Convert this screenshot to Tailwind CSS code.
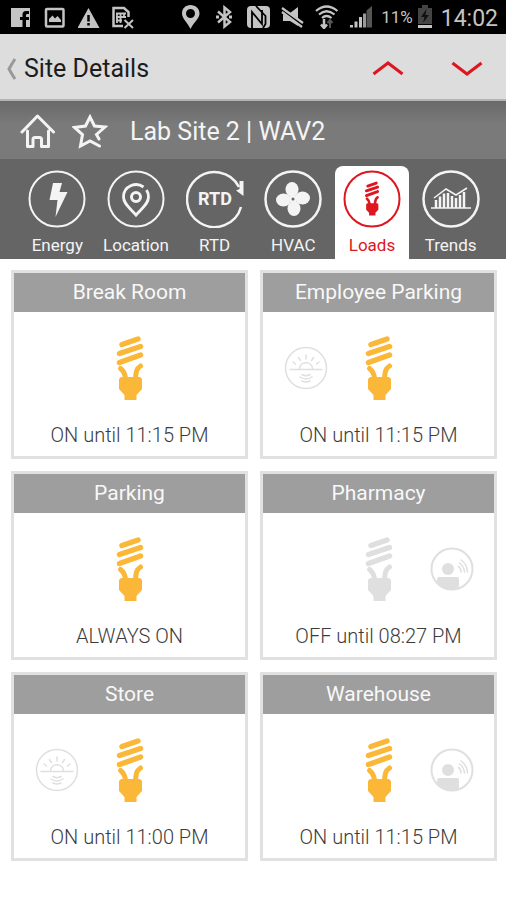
<!DOCTYPE html>
<html lang="en">
<head>
    <meta charset="UTF-8" />
    <meta name="viewport" content="width=device-width, initial-scale=1.0" />
    <title>Site Details</title>
    <script src="https://cdn.jsdelivr.net/npm/@tailwindcss/browser@4"></script>
    <style>
        body { font-family: Roboto, 'Liberation Sans', sans-serif; }
    </style>
</head>
<body class="bg-white text-[#3c3c3c] min-h-screen">

<!-- Shared icons -->
<svg class="hidden">
    <symbol id="bulb" viewBox="0 0 28 66">
        <g fill="none" stroke="currentColor" stroke-width="5.500" stroke-linecap="round">
            <path d="M6 9.500 22 4M3.500 18.500 24.500 11.500M3.500 27.500 24.500 20" />
            <path d="M4.500 33.500C7 35.500 9 38 9.500 43M24.500 31C20.500 33.500 20 37 19.500 43" stroke-width="5" />
        </g>
        <path fill="currentColor" d="M5 42H24L26 44V54L20.500 60V65H8.500V60L3 54V44Z" />
    </symbol>
    <symbol id="daylight" viewBox="0 0 44 44">
        <g fill="none" stroke="currentColor" stroke-width="1.500" stroke-linecap="round">
            <circle cx="22" cy="22" r="20.500" />
            <path d="M6 23.500H38M15.500 23C15.500 14.500 28.500 14.500 28.500 23" />
            <path d="M9 16 11.500 18M14.500 11.500 16.500 14.500M22 9V13M29.500 11.500 27.500 14.500M35 16 32.500 18" />
            <path d="M18 28.500Q22 31 26 28.500M16 31Q22 35 28 31M18 35Q22 37 26 35" />
        </g>
    </symbol>
    <symbol id="motion" viewBox="0 0 44 44">
        <circle cx="22" cy="22" r="20.500" fill="none" stroke="currentColor" stroke-width="2" />
        <circle cx="18" cy="22" r="6" fill="currentColor" />
        <path fill="currentColor" d="M7 32Q7 30 9 30H27Q29 30 29 32V41Q17 45 7 36Z" />
        <path fill="none" stroke="currentColor" stroke-width="1.500" stroke-linecap="round" d="M28.500 19.500Q31 21 31 25M29.500 16Q34 19 34.500 25M31 13Q37 17 37.500 25" />
    </symbol>
</svg>

<!-- Phone status bar -->
<div class="bg-black text-[#c4c4c4] h-[34px] pl-[10px] pr-2 flex justify-between items-center">
    <div class="flex items-center gap-3">
        <svg class="w-[22px] h-6" viewBox="0 0 22 24">
            <path fill="currentColor" d="M1 3H20V22H16V15H19V12H16V10Q16 9 17.500 9H19V6H16Q12.500 6 12.500 9.500V12H10V15H12.500V22H1Z" />
        </svg>
        <svg class="w-[22px] h-6" viewBox="0 0 22 24">
            <rect x="2" y="4" width="17.500" height="17.500" rx="1" fill="none" stroke="currentColor" stroke-width="2.500" />
            <path fill="currentColor" d="M5 17V14L8.500 10.500 11 13.500 13.500 11 17 15V17Z" />
        </svg>
        <svg class="w-[22px] h-6" viewBox="0 0 22 24">
            <path fill="currentColor" d="M10.500 3 21.500 23H-.5Z" />
            <path stroke="#000" stroke-width="2.500" d="M10.500 10V16.500M10.500 18V20.500" />
        </svg>
        <svg class="w-[22px] h-6" viewBox="0 0 22 24">
            <path fill="none" stroke="currentColor" stroke-width="2.500" d="M11 21H1.500V3H12L16.500 7V12" />
            <path fill="none" stroke="currentColor" stroke-width="1.800" d="M4 8.500H14M4 12H14M4 15.500H10M5 8V18M8.500 8V18M12 8V13" />
            <path stroke="currentColor" stroke-width="2" d="M12.500 15 21 23M21 15 12.500 23" />
        </svg>
    </div>
    <div class="flex items-center gap-2">
        <div class="flex items-center gap-[10px]">
            <svg class="w-6 h-6" viewBox="0 0 24 24">
                <path fill="currentColor" fill-rule="evenodd" d="M11.500 0C6.500 0 3 3.500 3 8.500 3 13.500 8 17 11.500 24 15 17 20.500 13.500 20.500 8.500 20.500 3.500 16.500 0 11.500 0ZM11.500 4A4.500 4.500 0 1 1 11.500 13 4.500 4.500 0 1 1 11.500 4Z" />
            </svg>
            <svg class="w-6 h-6" viewBox="0 0 24 24">
                <path fill="none" stroke="currentColor" stroke-width="2.500" d="M5 6.500 17 17 11.500 21.500V2.500L17 7 5 17.500" />
                <path fill="currentColor" d="M3 10.500H6V13.500H3ZM16 10.500H19V13.500H16Z" />
            </svg>
            <svg class="w-6 h-6" viewBox="0 0 24 24">
                <path fill="currentColor" d="M4 1H19Q23 1 23 5V19Q23 23 19 23H4Q0 23 0 19V5Q0 1 4 1Z" />
                <path fill="none" stroke="#000" stroke-width="1.800" d="M5 23V7L15 19V5M9 1 18.500 11V19L16 23" />
            </svg>
            <svg class="w-6 h-6" viewBox="0 0 24 24">
                <path fill="currentColor" d="M2 8H9L17 2V21L9 16H2Z" />
                <path stroke="#000" stroke-width="5" d="M0 4.500 24 21.500" />
                <path stroke="currentColor" stroke-width="2.200" d="M1 3 22 18M1 7 21 22" />
            </svg>
            <svg class="w-6 h-6" viewBox="0 0 24 24">
                <path fill="none" stroke="currentColor" stroke-width="2.200" d="M1 6Q11.500-3 22.500 6M4 9.500Q11.500 3 19.500 9.500M7 13Q11.500 9 16.500 13" />
                <path stroke="currentColor" stroke-width="2.500" d="M9 14V23M6 19.500 9 23 12 19.500" fill="none" />
                <path stroke="#555" stroke-width="2" d="M15 23V15M12.500 18 15 15 17.500 18" fill="none" />
            </svg>
            <svg class="w-6 h-6" viewBox="0 0 24 24">
                <path stroke="currentColor" stroke-width="3" d="M2.500 20V22.500M7 16.500V22.500M11.500 12V22.500" />
                <path stroke="#999" stroke-width="3" d="M15.500 8.500V22.500" />
                <path fill="#555" d="M17.500 5.500 23 1V22.500H17.500Z" />
            </svg>
        </div>
        <div class="flex items-center gap-1">
            <span class="text-[17px] leading-6">11%</span>
            <svg class="w-4 h-6" viewBox="0 0 16 24">
                <path fill="#444" d="M5 0H11V3H15V19H1V3H5Z" />
                <path fill="#111" d="M9.500 4 4 12H7.500L6 18 12 10H8.500Z" />
                <path fill="currentColor" d="M1 20H15V23H1Z" />
            </svg>
        </div>
        <span class="text-[23px] leading-8 pt-[3px]">14:02</span>
    </div>
</div>

<header class="bg-[#dddddd] text-[#1c1c1c] h-[67px] border-b-2 border-[#b4b4b4] pl-[6px] pr-4 pt-1 flex justify-between items-center">
    <a href="#" class="flex items-center gap-[6px]">
        <svg class="w-3 h-[22px]" viewBox="0 0 12 22">
            <path fill="none" stroke="#999" stroke-width="3" d="M9 1Q6 5.500 3 11 6 16.500 9 21" />
        </svg>
        <h1 class="text-[25px] leading-8">Site Details</h1>
    </a>
    <div class="flex gap-8">
        <button type="button" aria-label="Previous site" class="w-[47px] h-8 flex justify-center items-center text-[#dd1620]">
            <svg class="w-8 h-4" viewBox="0 0 32 16"><path fill="none" stroke="currentColor" stroke-width="3" d="M1.500 13 16 2 30.500 13" /></svg>
        </button>
        <button type="button" aria-label="Next site" class="w-[47px] h-8 flex justify-center items-center text-[#dd1620]">
            <svg class="w-8 h-4" viewBox="0 0 32 16"><path fill="none" stroke="currentColor" stroke-width="3" d="M1.500 2 16 13 30.500 2" /></svg>
        </button>
    </div>
</header>

<div class="bg-linear-to-b from-[#696969] to-[#7a7a7a] to-40% text-[#f4f4f4] h-[58px] pl-5 pt-1 flex items-center">
    <button type="button" aria-label="Home" class="mr-4">
        <svg class="w-9 h-9" viewBox="0 0 36 36">
            <path fill="none" stroke="currentColor" stroke-width="3" stroke-linejoin="round" stroke-linecap="round" d="M2 18 17.500 2 33.500 18M7.500 17V32.500H13V25.500Q13 23.500 15 23.500H19.500Q21.500 23.500 21.500 25.500V32.500H28.500V17" />
        </svg>
    </button>
    <button type="button" aria-label="Favorite" class="mr-[22px]">
        <svg class="w-9 h-9" viewBox="0 0 36 36">
            <path fill="none" stroke="currentColor" stroke-width="3" stroke-linecap="round" d="M27 25 24.500 20.500 33 13 22.500 12 18 3 13.500 12 2.500 13.500 10.500 20.500 8.500 32 18 27 27.500 32" />
        </svg>
    </button>
    <h2 class="text-[25px] leading-8">Lab Site 2 | WAV2</h2>
</div>

<nav class="bg-[#656565] text-[#f4f4f4] h-[100px] pl-[18px] pr-4 pt-[7px] grid grid-cols-6 text-[17px] leading-6 text-center">
    <a href="#" class="flex flex-col items-center pt-1">
        <svg class="w-[58px] h-[58px]" viewBox="0 0 58 58">
            <circle cx="29" cy="29" r="27.500" fill="none" stroke="currentColor" stroke-width="2" />
            <path fill="currentColor" d="M25 13H34L31.500 22H39.500L27.500 47 29.500 30H21.500Z" />
        </svg>
        <span class="mt-[5px]">Energy</span>
    </a>
    <a href="#" class="flex flex-col items-center pt-1">
        <svg class="w-[58px] h-[58px]" viewBox="0 0 58 58">
            <circle cx="29" cy="29" r="27.500" fill="none" stroke="currentColor" stroke-width="2" />
            <path fill="none" stroke="currentColor" stroke-width="2.800" d="M36.500 17C29 11.500 16.500 16 16.500 27 16.500 34 23 38 29 45 35 38 41.500 34 41.500 27Q41.500 23 39.500 20" />
            <circle cx="29" cy="27" r="4.500" fill="none" stroke="currentColor" stroke-width="3" />
        </svg>
        <span class="mt-[5px]">Location</span>
    </a>
    <a href="#" class="flex flex-col items-center pt-1">
        <svg class="w-[58px] h-[58px]" viewBox="0 0 58 58">
            <path fill="none" stroke="currentColor" stroke-width="2.500" d="M55 37A27.500 27.500 0 1 1 53 17" />
            <path fill="currentColor" d="M53.500 11H57.500V26L50 20.500 53.500 19Z" />
            <text x="29" y="35" text-anchor="middle" fill="currentColor" class="text-[18px] font-bold">RTD</text>
        </svg>
        <span class="mt-[5px]">RTD</span>
    </a>
    <a href="#" class="flex flex-col items-center pt-1">
        <svg class="w-[58px] h-[58px]" viewBox="0 0 58 58">
            <circle cx="29" cy="29" r="27.500" fill="none" stroke="currentColor" stroke-width="2.500" />
            <g fill="currentColor">
                <ellipse cx="28" cy="19.500" rx="6.500" ry="7.500" />
                <ellipse cx="38.500" cy="28" rx="7.500" ry="6.500" />
                <ellipse cx="30" cy="38.500" rx="6.500" ry="7.500" />
                <ellipse cx="19.500" cy="30" rx="7.500" ry="6.500" />
                <circle cx="29" cy="29" r="4" />
            </g>
            <circle cx="29" cy="29" r="1.500" fill="#656565" />
        </svg>
        <span class="mt-[5px]">HVAC</span>
    </a>
    <a href="#" aria-current="page" class="bg-white text-[#dd1620] rounded-t-lg mx-[2px] flex flex-col items-center pt-1">
        <svg class="w-[58px] h-[58px]" viewBox="0 0 58 58">
            <circle cx="29" cy="29" r="27.500" fill="none" stroke="currentColor" stroke-width="2" />
            <use href="#bulb" x="21" y="11" width="16" height="35" />
        </svg>
        <span class="mt-[5px]">Loads</span>
    </a>
    <a href="#" class="flex flex-col items-center pt-1">
        <svg class="w-[58px] h-[58px]" viewBox="0 0 58 58">
            <circle cx="29" cy="29" r="27.500" fill="none" stroke="currentColor" stroke-width="2.500" />
            <path fill="none" stroke="currentColor" stroke-width="1.500" d="M9 38H49M12 28 24 19 34 25 45 18" />
            <path stroke="currentColor" stroke-width="2.500" d="M14 38V30M18 38V26.500M22 38V23.500M26 38V23M30 38V26M34 38V28M38 38V25M42 38V22" />
        </svg>
        <span class="mt-[5px]">Trends</span>
    </a>
</nav>

<main class="pl-[11px] pr-[9px] py-[11px] grid grid-cols-2 gap-3 text-center">
    <section class="border-3 border-[#e1e1e1]">
        <h3 class="bg-[#9e9e9e] text-[#f8f8f8] text-[21px] leading-[39px]">Break Room</h3>
        <div class="h-28 px-[6px] grid grid-cols-3 place-items-center">
            <svg class="col-start-2 w-7 h-[66px] text-[#fbb737]"><use href="#bulb" /></svg>
        </div>
        <p class="text-[20px] font-light leading-[22px] pb-[10px]">ON until 11:15 PM</p>
    </section>

    <section class="border-3 border-[#e1e1e1]">
        <h3 class="bg-[#9e9e9e] text-[#f8f8f8] text-[21px] leading-[39px]">Employee Parking</h3>
        <div class="h-28 px-[6px] grid grid-cols-3 place-items-center">
            <svg class="w-11 h-11 text-[#dfdfdf]"><use href="#daylight" /></svg>
            <svg class="w-7 h-[66px] text-[#fbb737]"><use href="#bulb" /></svg>
        </div>
        <p class="text-[20px] font-light leading-[22px] pb-[10px]">ON until 11:15 PM</p>
    </section>

    <section class="border-3 border-[#e1e1e1]">
        <h3 class="bg-[#9e9e9e] text-[#f8f8f8] text-[21px] leading-[39px]">Parking</h3>
        <div class="h-28 px-[6px] grid grid-cols-3 place-items-center">
            <svg class="col-start-2 w-7 h-[66px] text-[#fbb737]"><use href="#bulb" /></svg>
        </div>
        <p class="text-[20px] font-light leading-[22px] pb-[10px]">ALWAYS ON</p>
    </section>

    <section class="border-3 border-[#e1e1e1]">
        <h3 class="bg-[#9e9e9e] text-[#f8f8f8] text-[21px] leading-[39px]">Pharmacy</h3>
        <div class="h-28 px-[6px] grid grid-cols-3 place-items-center">
            <svg class="col-start-2 w-7 h-[66px] text-[#dfdfdf]"><use href="#bulb" /></svg>
            <svg class="w-11 h-11 text-[#dfdfdf]"><use href="#motion" /></svg>
        </div>
        <p class="text-[20px] font-light leading-[22px] pb-[10px]">OFF until 08:27 PM</p>
    </section>

    <section class="border-3 border-[#e1e1e1]">
        <h3 class="bg-[#9e9e9e] text-[#f8f8f8] text-[21px] leading-[39px]">Store</h3>
        <div class="h-28 px-[6px] grid grid-cols-3 place-items-center">
            <svg class="w-11 h-11 text-[#dfdfdf]"><use href="#daylight" /></svg>
            <svg class="w-7 h-[66px] text-[#fbb737]"><use href="#bulb" /></svg>
        </div>
        <p class="text-[20px] font-light leading-[22px] pb-[10px]">ON until 11:00 PM</p>
    </section>

    <section class="border-3 border-[#e1e1e1]">
        <h3 class="bg-[#9e9e9e] text-[#f8f8f8] text-[21px] leading-[39px]">Warehouse</h3>
        <div class="h-28 px-[6px] grid grid-cols-3 place-items-center">
            <svg class="col-start-2 w-7 h-[66px] text-[#fbb737]"><use href="#bulb" /></svg>
            <svg class="w-11 h-11 text-[#dfdfdf]"><use href="#motion" /></svg>
        </div>
        <p class="text-[20px] font-light leading-[22px] pb-[10px]">ON until 11:15 PM</p>
    </section>
</main>

</body>
</html>
